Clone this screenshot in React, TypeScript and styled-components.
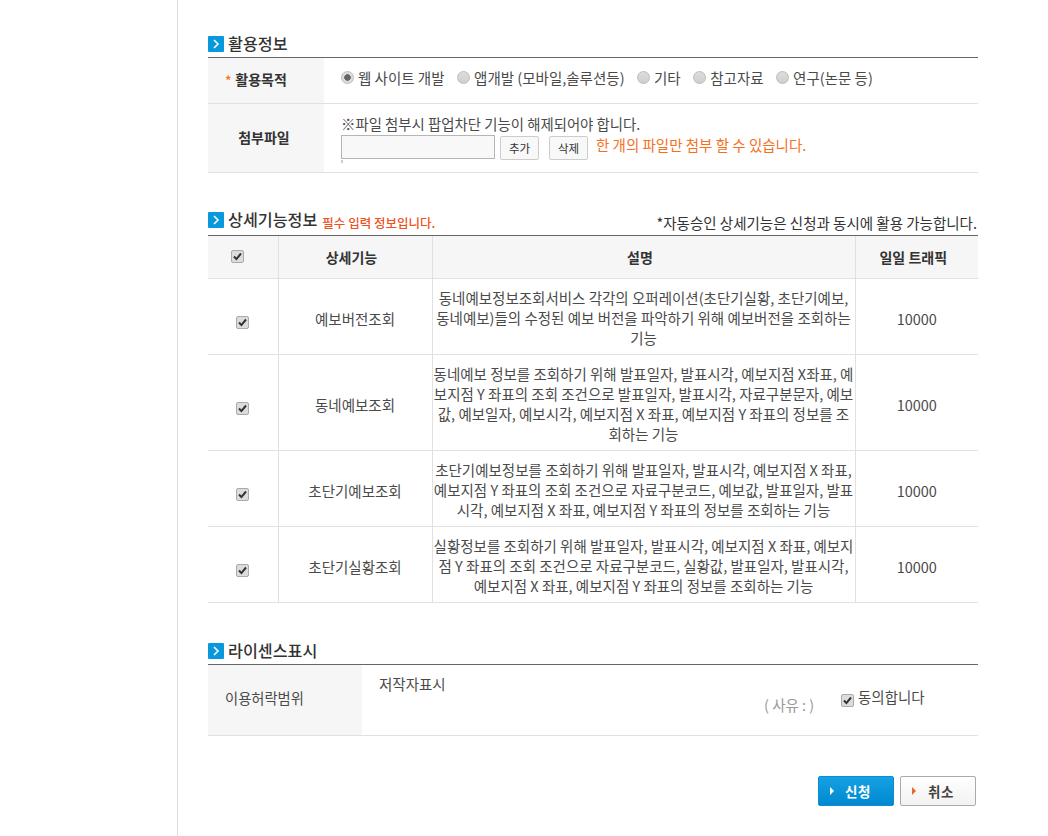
import React from "react";
import styled, { createGlobalStyle } from "styled-components";

const Global = createGlobalStyle`
  html, body { margin: 0; padding: 0; background: #fff; }
  body { font-family: "Noto Sans CJK KR", "Noto Sans", sans-serif; font-size: 14.5px; color: #4a4a4a; }
`;
const Page = styled.div`
  display: flex;
  width: 1048px;
  height: 836px;
  overflow: hidden;
`;
const Side = styled.div`
  width: 177px;
  flex: none;
  border-right: 1px solid #ddd;
`;
const Main = styled.main`
  width: 770px;
  margin-left: 30px;
  padding-top: 32px;
`;
const Section = styled.section<{ $gap?: number }>`
  margin-bottom: ${(p) => p.$gap ?? 0}px;
`;
const Head = styled.div<{ $h?: number }>`
  height: ${(p) => p.$h ?? 25}px;
  display: flex;
  align-items: flex-start;
  justify-content: space-between;
  border-bottom: 1px solid #666;
`;
const HeadLeft = styled.div`
  display: flex;
  align-items: center;
  height: 16px;
  margin-top: 4px;
`;
const Badge = styled.span`
  width: 16px;
  height: 16px;
  margin-right: 5px;
  display: flex;
  border-radius: 1px;
  background: #0a98dc;
`;
const Title = styled.h2`
  margin: 0;
  font-size: 16.2px;
  font-weight: 500;
  line-height: 22px;
  color: #333;
  white-space: nowrap;
  position: relative;
  top: -1px;
  left: -1px;
`;
const Required = styled.span`
  margin-left: 4px;
  margin-top: 4px;
  font-size: 12.5px;
  font-weight: 500;
  color: #f0511e;
  white-space: nowrap;
`;
const Note = styled.span`
  font-size: 14.5px;
  line-height: 20px;
  margin-top: 5px;
  color: #333;
  margin-right: 1px;
`;
const Row = styled.div<{ $h: number }>`
  display: flex;
  height: ${(p) => p.$h}px;
  border-bottom: 1px solid #e1e1e1;
`;
const Label = styled.div<{ $pad?: number }>`
  width: 116px;
  flex: none;
  box-sizing: border-box;
  padding-right: ${(p) => p.$pad ?? 4}px;
  padding-bottom: 3px;
  display: flex;
  align-items: center;
  justify-content: center;
  background: #f6f6f6;
  font-size: 14px;
  font-weight: 700;
  color: #333;
`;
const PlainLabel = styled.div`
  width: 154px;
  flex: none;
  box-sizing: border-box;
  padding: 0 0 6px 17px;
  display: flex;
  align-items: center;
  background: #f6f6f6;
  font-size: 14.3px;
`;
const Star = styled.span`
  color: #f07a22;
  font-size: 12px;
  margin-right: 4px;
`;
const RadioRow = styled.div`
  display: flex;
  align-items: center;
  padding: 0 0 6px 17px;
`;
const RadioItem = styled.label`
  display: flex;
  align-items: center;
  margin-right: 12.5px;
  line-height: 20px;
  white-space: nowrap;
`;
const RadioDot = styled.span<{ $on?: boolean }>`
  width: 11px;
  height: 11px;
  margin-right: 4px;
  border-radius: 50%;
  border: 1px solid #bbb;
  background: ${(p) => (p.$on ? "radial-gradient(circle, #666 0 3px, #ddd 3.5px)" : "linear-gradient(#ddd, #cfcfcf)")};
`;
const FileCell = styled.div`
  padding: 10px 0 0 17px;
  line-height: 20px;
  font-size: 14.4px;
`;
const FileLine = styled.div`
  display: flex;
  align-items: flex-start;
  margin-top: 1px;
  white-space: nowrap;
`;
const FileInput = styled.div`
  width: 152px;
  height: 22px;
  background: #f8f8f8;
  border: 1px solid #b5b5b5;
  margin-right: 5px;
  position: relative;
  &::after {
    content: "";
    position: absolute;
    left: -1px;
    top: 24px;
    width: 2px;
    height: 3px;
    background: #ccc;
  }
`;
const SmallButton = styled.button`
  width: 39px;
  height: 24px;
  margin: 1px 10px 0 0;
  padding: 0;
  background: #f8f8f8;
  border: 1px solid #ccc;
  border-radius: 2px;
  font: 11.5px "Noto Sans CJK KR", sans-serif;
  color: #333;
`;
const Warn = styled.span`
  margin-left: -2px;
  font-size: 14.5px;
  color: #f4701f;
`;
const Table = styled.table`
  width: 770px;
  border-collapse: collapse;
  table-layout: fixed;
`;
const Th = styled.th`
  height: 42px;
  padding: 0 7px 0 0;
  background: #f6f6f6;
  border-bottom: 1px solid #e1e1e1;
  border-left: 1px solid #e1e1e1;
  font-size: 14px;
  font-weight: 700;
  color: #333;
  &:first-child { border-left: 0; }
`;
const Td = styled.td`
  padding: 3px 0 0;
  text-align: center;
  border-bottom: 1px solid #e1e1e1;
  border-left: 1px solid #e1e1e1;
  &:first-child { border-left: 0; padding: 0; }
`;
const Desc = styled(Td)`
  line-height: 20px;
  white-space: nowrap;
`;
const Box = styled.span<{ $shift?: number; $x?: number }>`
  display: inline-flex;
  align-items: center;
  justify-content: center;
  width: 11px;
  height: 11px;
  border: 1px solid #aaa;
  border-radius: 2px;
  background: #dcdcdc;
  position: relative;
  top: ${(p) => p.$shift ?? 0}px;
  left: ${(p) => p.$x ?? 0}px;
`;
const LicenseBody = styled.div`
  flex: 1;
  padding: 8px 0 0 17px;
  position: relative;
`;
const Reason = styled.span`
  position: absolute;
  left: 402px;
  top: 29px;
  color: #999;
`;
const Agree = styled.label`
  position: absolute;
  left: 479px;
  top: 21px;
  display: flex;
  align-items: center;
  gap: 4px;
`;
const Actions = styled.div`
  display: flex;
  justify-content: flex-end;
  gap: 6px;
  margin: 40px 2px 0 0;
`;
const Action = styled.button<{ $primary?: boolean }>`
  width: 76px;
  height: 30px;
  padding: 0 0 1px ${(p) => (p.$primary ? 4 : 6)}px;
  position: relative;
  border-radius: 2px;
  border: 1px solid ${(p) => (p.$primary ? "#0a8fd4" : "#aaa")};
  background: ${(p) => (p.$primary ? "linear-gradient(#14a2e2, #0288d0)" : "linear-gradient(#fff, #f2f2f2)")};
  color: ${(p) => (p.$primary ? "#fff" : "#444")};
  font: 700 13.5px "Noto Sans CJK KR", sans-serif;
  letter-spacing: 0.5px;
`;
const Arrow = styled.i<{ $c: string }>`
  position: absolute;
  left: 11px;
  top: 10px;
  border-left: 4px solid ${(p) => p.$c};
  border-top: 4px solid transparent;
  border-bottom: 4px solid transparent;
`;

const Chevron = () => (
  <svg width="16" height="16" viewBox="0 0 16 16"><path d="M6 4l4 4-4 4" fill="none" stroke="#fff" strokeWidth="1.6" /></svg>
);
const Check = () => (
  <svg width="9" height="9" viewBox="0 0 9 9"><path d="M1 4.5l2.4 2.6L8 1.5" fill="none" stroke="#333" strokeWidth="2" /></svg>
);
const SectionHead = ({ title, children }: { title: string; children?: React.ReactNode }) => (
  <HeadLeft>
    <Badge><Chevron /></Badge>
    <Title>{title}</Title>
    {children}
  </HeadLeft>
);

const rows = [
  { h: 76, name: "예보버전조회", lines: ["동네예보정보조회서비스 각각의 오퍼레이션(초단기실황, 초단기예보,", "동네예보)들의 수정된 예보 버전을 파악하기 위해 예보버전을 조회하는", "기능"] },
  { h: 96, name: "동네예보조회", lines: ["동네예보 정보를 조회하기 위해 발표일자, 발표시각, 예보지점 X좌표, 예", "보지점 Y 좌표의 조회 조건으로 발표일자, 발표시각, 자료구분문자, 예보", "값, 예보일자, 예보시각, 예보지점 X 좌표, 예보지점 Y 좌표의 정보를 조", "회하는 기능"] },
  { h: 76, name: "초단기예보조회", lines: ["초단기예보정보를 조회하기 위해 발표일자, 발표시각, 예보지점 X 좌표,", "예보지점 Y 좌표의 조회 조건으로 자료구분코드, 예보값, 발표일자, 발표", "시각, 예보지점 X 좌표, 예보지점 Y 좌표의 정보를 조회하는 기능"] },
  { h: 76, name: "초단기실황조회", lines: ["실황정보를 조회하기 위해 발표일자, 발표시각, 예보지점 X 좌표, 예보지", "점 Y 좌표의 조회 조건으로 자료구분코드, 실황값, 발표일자, 발표시각,", "예보지점 X 좌표, 예보지점 Y 좌표의 정보를 조회하는 기능"] },
];

export default function App() {
  return (
    <Page>
      <Global />
      <Side />
      <Main>
        <Section $gap={35}>
          <Head><SectionHead title="활용정보" /></Head>
          <Row $h={45}>
            <Label $pad={20}><Star>*</Star>활용목적</Label>
            <RadioRow>
              <RadioItem><RadioDot $on />웹 사이트 개발</RadioItem>
              <RadioItem><RadioDot />앱개발 (모바일,솔루션등)</RadioItem>
              <RadioItem><RadioDot />기타</RadioItem>
              <RadioItem><RadioDot />참고자료</RadioItem>
              <RadioItem><RadioDot />연구(논문 등)</RadioItem>
            </RadioRow>
          </Row>
          <Row $h={68}>
            <Label>첨부파일</Label>
            <FileCell>
              ※파일 첨부시 팝업차단 기능이 해제되어야 합니다.
              <FileLine>
                <FileInput />
                <SmallButton>추가</SmallButton>
                <SmallButton>삭제</SmallButton>
                <Warn>한 개의 파일만 첨부 할 수 있습니다.</Warn>
              </FileLine>
            </FileCell>
          </Row>
        </Section>
        <Section $gap={36}>
          <Head $h={27}>
            <SectionHead title="상세기능정보"><Required>필수 입력 정보입니다.</Required></SectionHead>
            <Note>*자동승인 상세기능은 신청과 동시에 활용 가능합니다.</Note>
          </Head>
          <Table>
            <colgroup><col width="70" /><col width="154" /><col width="423" /><col width="123" /></colgroup>
            <thead>
              <tr>
                <Th><Box $shift={-2} $x={-2}><Check /></Box></Th>
                <Th>상세기능</Th>
                <Th>설명</Th>
                <Th>일일 트래픽</Th>
              </tr>
            </thead>
            <tbody>
              {rows.map((r) => (
                <tr key={r.name} style={{ height: r.h }}>
                  <Td><Box $shift={4}><Check /></Box></Td>
                  <Td>{r.name}</Td>
                  <Desc>{r.lines.map((l) => <div key={l}>{l}</div>)}</Desc>
                  <Td>10000</Td>
                </tr>
              ))}
            </tbody>
          </Table>
        </Section>
        <Section>
          <Head><SectionHead title="라이센스표시" /></Head>
          <Row $h={70}>
            <PlainLabel>이용허락범위</PlainLabel>
            <LicenseBody>
              저작자표시
              <Reason>( 사유 : )</Reason>
              <Agree><Box $shift={4}><Check /></Box>동의합니다</Agree>
            </LicenseBody>
          </Row>
        </Section>
        <Actions>
          <Action $primary><Arrow $c="#fff" />신청</Action>
          <Action><Arrow $c="#e8682a" />취소</Action>
        </Actions>
      </Main>
    </Page>
  );
}
